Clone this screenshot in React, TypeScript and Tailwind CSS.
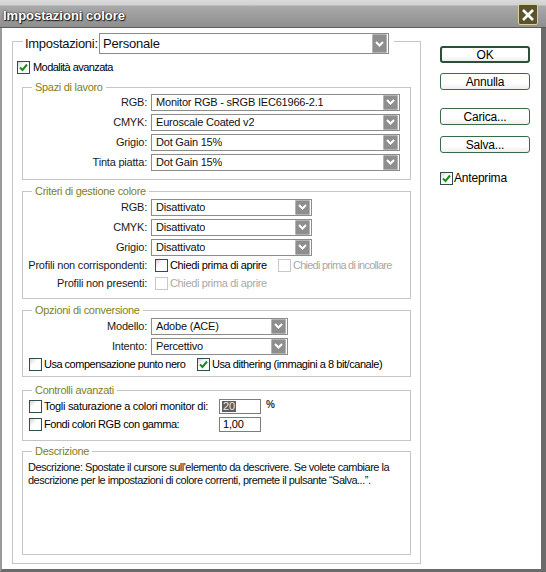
import React from 'react';

const OLIVE = 'text-[#7f7f1c]';

function Check({ checked = false, disabled = false }: { checked?: boolean; disabled?: boolean }) {
  return (
    <span
      className={`flex items-center justify-center w-[13px] h-[13px] shrink-0 border ${
        disabled
          ? 'border-[#c8c8c8] bg-white'
          : 'border-[#2f4f4f] bg-[linear-gradient(135deg,#d4d4d4_0%,#ffffff_40%)]'
      }`}
    >
      {checked && (
        <svg width="11" height="11" viewBox="0 0 11 11">
          <path d="M2 5.5 L4.5 8 L9 2.5" fill="none" stroke="#1f8a1f" strokeWidth="2" />
        </svg>
      )}
    </span>
  );
}

function Select({ value, width, big = false }: { value: string; width: string; big?: boolean }) {
  return (
    <div
      className={`flex items-center justify-between border border-[#8c8c8c] bg-white ${width} ${
        big ? 'h-[21px] text-[13px] pl-[3px]' : 'h-[17px] pl-[4px]'
      }`}
    >
      <span className="truncate text-[#111]">{value}</span>
      <span
        className={`flex items-center justify-center mr-[1px] rounded-[1px] border border-[#b4b4b4] bg-[#8e8e8e] ${
          big ? 'w-[15px] h-[19px]' : 'w-[15px] h-[15px]'
        }`}
      >
        <svg width="9" height="6" viewBox="0 0 9 6">
          <path d="M1 1 L4.5 4.5 L8 1" fill="none" stroke="#fff" strokeWidth="2" />
        </svg>
      </span>
    </div>
  );
}

function Group({ title, className = '', children }: { title: string; className?: string; children: React.ReactNode }) {
  return (
    <fieldset className={`mx-[9px] border border-[#c6c6c6] ${className}`}>
      <legend className={`ml-[9px] px-[3px] h-[13px] leading-[13px] tracking-[-0.3px] ${OLIVE}`}>{title}</legend>
      {children}
    </fieldset>
  );
}

function Row({ label, children, className = '' }: { label: string; children: React.ReactNode; className?: string }) {
  return (
    <div className={`flex items-center ${className}`}>
      <span className="w-[125px] text-right pr-[1px] text-[#1a1a1a]">{label}</span>
      <div className="ml-[3px] flex items-center">{children}</div>
    </div>
  );
}

function Button({ label, main = false }: { label: string; main?: boolean }) {
  return (
    <button
      className={`w-[90px] h-[17px] flex items-center justify-center rounded-[3px] bg-[linear-gradient(to_bottom,#ffffff_0%,#ffffff_60%,#eeeeee_100%)] text-[12px] leading-none text-black ${
        main ? 'border-2 border-[#2c4f36]' : 'border border-[#3b6a48]'
      }`}
    >
      {label}
    </button>
  );
}

export default function App() {
  return (
    <div className="w-[546px] h-[572px] flex flex-col bg-white overflow-hidden font-['Liberation_Sans',Arial,sans-serif] text-[11px] tracking-[-0.2px] text-black">
      {/* title bar */}
      <div className="h-[28px] shrink-0 flex items-center justify-between bg-[linear-gradient(to_bottom,#dadada_0px,#d2d2d2_5px,#a9a9a9_6px,#8f8f8f_27px,#5c5c5c_27px)]">
        <span className="ml-[3px] mt-[3px] text-[13px] font-bold tracking-normal text-white [text-shadow:0_0_2px_#000,1px_1px_1px_#222]">
          Impostazioni colore
        </span>
        <span className="mr-[8px] mt-[1px] w-[20px] h-[21px] flex items-center justify-center rounded-[2px] border border-[#d8d0a0] bg-[#5b532c]">
          <svg width="14" height="14" viewBox="0 0 14 14">
            <path d="M2 2 L12 12 M12 2 L2 12" stroke="#fff" strokeWidth="2.6" />
          </svg>
        </span>
      </div>

      <div className="flex flex-1 min-h-0 border-l-2 border-l-[#9a9a9a] border-r-[5px] border-r-[#6b6b6b] border-b-[3px] border-b-[#6b6b6b]">
        {/* left column */}
        <div className="pt-[5px] pl-[10px]">
          <fieldset className="w-[409px] border border-[#c6c6c6] pb-[8px]">
            <legend className="ml-[10px] pl-[2px] pr-[5px] h-[16px]">
              <div className="flex items-center">
                <span className="w-[74px] text-[13px] tracking-[-0.3px] text-[#111]">Impostazioni:</span>
                <Select value="Personale" width="w-[290px]" big />
              </div>
            </legend>

            <div className="mt-[10px] pl-[4px] flex items-center gap-[3px]">
              <Check checked />
              <span className="tracking-[-0.55px]">Modalità avanzata</span>
            </div>

            <Group title="Spazi di lavoro" className="mt-[5px] pb-[8px]">
              <div className="flex flex-col gap-[3px]">
                <Row label="RGB:">
                  <Select value="Monitor RGB - sRGB IEC61966-2.1" width="w-[249px]" />
                </Row>
                <Row label="CMYK:">
                  <Select value="Euroscale Coated v2" width="w-[249px]" />
                </Row>
                <Row label="Grigio:">
                  <Select value="Dot Gain 15%" width="w-[249px]" />
                </Row>
                <Row label="Tinta piatta:">
                  <Select value="Dot Gain 15%" width="w-[249px]" />
                </Row>
              </div>
            </Group>

            <Group title="Criteri di gestione colore" className="mt-[5px] pt-[1px] pb-[6px]">
              <div className="flex flex-col gap-[3px]">
                <Row label="RGB:">
                  <Select value="Disattivato" width="w-[161px]" />
                </Row>
                <Row label="CMYK:">
                  <Select value="Disattivato" width="w-[161px]" />
                </Row>
                <Row label="Grigio:">
                  <Select value="Disattivato" width="w-[161px]" />
                </Row>
              </div>
              <Row label="Profili non corrispondenti:" className="h-[16px] mt-[2px]">
                <div className="ml-[4px] w-[123px] flex items-center gap-[2px]">
                  <Check />
                  <span className="tracking-[-0.35px]">Chiedi prima di aprire</span>
                </div>
                <div className="flex items-center gap-[2px] text-[#a8a8a8]">
                  <Check disabled />
                  <span className="tracking-[-0.75px]">Chiedi prima di incollare</span>
                </div>
              </Row>
              <Row label="Profili non presenti:" className="h-[16px] mt-[2px]">
                <div className="ml-[4px] flex items-center gap-[2px] text-[#a8a8a8]">
                  <Check disabled />
                  <span className="tracking-[-0.35px]">Chiedi prima di aprire</span>
                </div>
              </Row>
            </Group>

            <Group title="Opzioni di conversione" className="mt-[5px] pt-[1px] pb-[5px]">
              <div className="flex flex-col gap-[3px]">
                <Row label="Modello:">
                  <Select value="Adobe (ACE)" width="w-[137px]" />
                </Row>
                <Row label="Intento:">
                  <Select value="Percettivo" width="w-[137px]" />
                </Row>
              </div>
              <div className="mt-[3px] h-[13px] pl-[6px] flex items-center">
                <div className="w-[168px] flex items-center gap-[2px]">
                  <Check />
                  <span className="tracking-[-0.5px]">Usa compensazione punto nero</span>
                </div>
                <div className="flex items-center gap-[2px]">
                  <Check checked />
                  <span className="tracking-[-0.45px]">Usa dithering (immagini a 8 bit/canale)</span>
                </div>
              </div>
            </Group>

            <Group title="Controlli avanzati" className="mt-[7px] pt-[2px] pb-[8px]">
              <div className="flex items-center pl-[6px] h-[15px]">
                <div className="w-[190px] flex items-center gap-[2px]">
                  <Check />
                  <span className="tracking-[-0.3px]">Togli saturazione a colori monitor di:</span>
                </div>
                <div className="w-[42px] h-[15px] border border-[#7c7c7c] bg-white pl-[2px] flex items-center">
                  <span className="bg-[#5e5e5e] text-[#e8e8e8] px-[1px] leading-[11px]">20</span>
                </div>
                <span className="ml-[5px] -mt-[4px] text-[10px] font-bold text-[#333]">%</span>
              </div>
              <div className="flex items-center pl-[6px] h-[15px] mt-[3px]">
                <div className="w-[190px] flex items-center gap-[2px]">
                  <Check />
                  <span className="tracking-[-0.45px]">Fondi colori RGB con gamma:</span>
                </div>
                <div className="w-[42px] h-[15px] border border-[#7c7c7c] bg-white pl-[3px] flex items-center">
                  <span>1,00</span>
                </div>
              </div>
            </Group>

            <Group title="Descrizione" className="mt-[4px]">
              <div className="h-[96px] pt-[3px] pl-[5px] leading-[13px] tracking-[-0.5px] whitespace-nowrap text-[#111]">
                Descrizione: Spostate il cursore sull'elemento da descrivere. Se volete cambiare la
                <br />
                descrizione per le impostazioni di colore correnti, premete il pulsante “Salva...”.
              </div>
            </Group>
          </fieldset>
        </div>

        {/* right column */}
        <div className="ml-[19px] mt-[18px] flex flex-col">
          <Button label="OK" main />
          <div className="mt-[10px]">
            <Button label="Annulla" />
          </div>
          <div className="mt-[18px]">
            <Button label="Carica..." />
          </div>
          <div className="mt-[11px]">
            <Button label="Salva..." />
          </div>
          <div className="mt-[16px] flex items-center gap-[1px] text-[12px]">
            <Check checked />
            <span>Anteprima</span>
          </div>
        </div>
      </div>
    </div>
  );
}
